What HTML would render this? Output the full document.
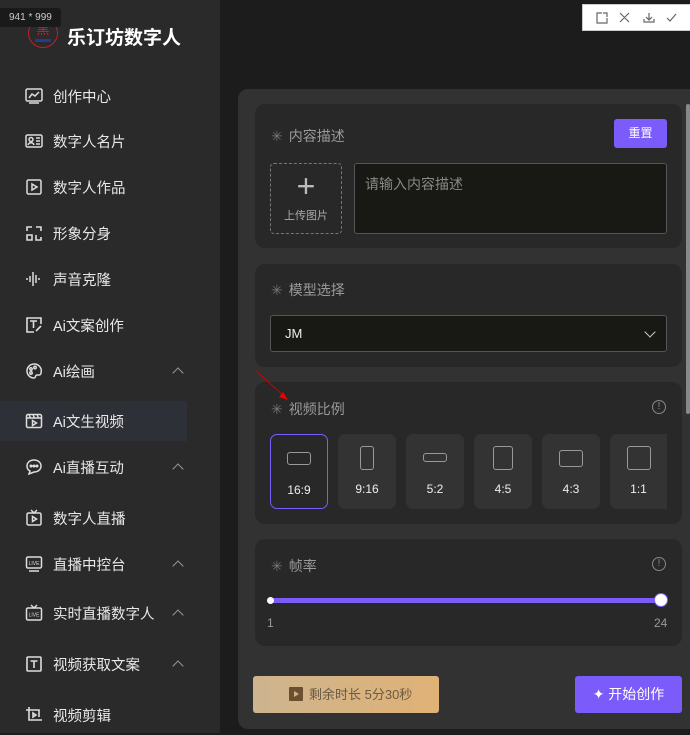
<!DOCTYPE html>
<html><head><meta charset="utf-8"><style>
*{box-sizing:border-box;margin:0;padding:0}
body{width:690px;height:733px;overflow:hidden;background:#1c1c1c;font-family:"Liberation Sans","Noto Sans CJK SC",sans-serif;position:relative;color:#ddd}
.side{position:absolute;left:0;top:0;width:220px;height:733px;background:#2a2a2a}
.logo{position:absolute;left:28px;top:18px;width:30px;height:30px;border-radius:50%;border:1.5px solid #c0202a;overflow:hidden}
.brand{position:absolute;left:67px;top:23px;font-size:19px;font-weight:bold;color:#fff}
.tag{position:absolute;left:0;top:8px;width:61px;height:19px;background:#1a1a1a;color:#ccc;font-size:10px;line-height:19px;padding-left:9px;border-radius:0 3px 3px 0}
.it{position:absolute;left:0;width:187px;height:40px;display:flex;align-items:center;font-size:14.5px;color:#e8e8e8}
.it svg{position:absolute;left:25px;width:18px;height:18px}
.it span{position:absolute;left:53px}
.it i{position:absolute;left:174px;width:8px;height:8px;border-left:1.4px solid #999;border-top:1.4px solid #999;transform:rotate(45deg);top:18px}
.act{background:#2e3038}
.panel{position:absolute;left:238px;top:89px;width:460px;height:640px;background:#323232;border-radius:10px}
.card{position:absolute;left:255px;width:427px;background:#282828;border-radius:10px}
.lbl{position:absolute;left:16px;font-size:14px;color:#9a9a9a}
.lbl b{font-weight:normal;color:#777;margin-right:6px}
.info{position:absolute;right:16px;width:14px;height:14px;border:1.3px solid #888;border-radius:50%;font-size:10px;color:#888;text-align:center;line-height:12px}
.r{position:absolute;top:52px;width:58px;height:75px;background:#333;border-radius:7px;text-align:center;font-size:12px;color:#eee}
.r .s{position:absolute;left:50%;transform:translateX(-50%);border:1.4px solid #999;border-radius:3px}
.r em{position:absolute;top:48px;left:0;right:0;font-style:normal}
</style></head><body>
<div class="side">
<div class="logo"><div style="color:#d0202a;font-size:13px;text-align:center;line-height:18px;margin-top:2px">黑</div><div style="height:3px;background:#2a3a8a;margin:0 6px"></div></div>
<div class="tag">941 * 999</div>
<div class="brand">乐订坊数字人</div>
<div class="it" style="top:76px"><svg viewBox="0 0 18 18" fill="none" stroke="#ddd" stroke-width="1.5"><rect x="1" y="2" width="16" height="12" rx="1.5"/><path d="M4 11l3-4 3 2 4-4M4 16h10"/></svg><span>创作中心</span></div>
<div class="it" style="top:121px"><svg viewBox="0 0 18 18" fill="none" stroke="#ddd" stroke-width="1.5"><rect x="1" y="3" width="16" height="12" rx="1.5"/><circle cx="6" cy="7.5" r="2"/><path d="M3 13c1-3 5-3 6 0M11 6h4M11 9h4M11 12h4"/></svg><span>数字人名片</span></div>
<div class="it" style="top:167px"><svg viewBox="0 0 18 18" fill="none" stroke="#ddd" stroke-width="1.5"><rect x="2" y="2" width="14" height="14" rx="1.5"/><path d="M7 6l5 3-5 3z"/></svg><span>数字人作品</span></div>
<div class="it" style="top:213px"><svg viewBox="0 0 18 18" fill="none" stroke="#ddd" stroke-width="1.6"><path d="M2 7V3h5M11 3h5v4M2 11h5v5H2zM11 11v5h5v-3"/></svg><span>形象分身</span></div>
<div class="it" style="top:259px"><svg viewBox="0 0 18 18" fill="none" stroke="#ddd" stroke-width="1.5"><path d="M2 8v2M5 6v6M8 2v14M11 5v8M14 8v2"/></svg><span>声音克隆</span></div>
<div class="it" style="top:305px"><svg viewBox="0 0 18 18" fill="none" stroke="#ddd" stroke-width="1.6"><path d="M16 8V2H2v14h7M5 5h7M8.5 5v7M11 15l5-5"/></svg><span>Ai文案创作</span></div>
<div class="it" style="top:351px"><svg viewBox="0 0 18 18" fill="none" stroke="#ddd" stroke-width="1.5"><path d="M9 2a7 7 0 1 0 0 14c2 0 1-3 3-3h2a2 2 0 0 0 2-2A7 7 0 0 0 9 2z"/><circle cx="6" cy="7" r="1.2"/><circle cx="10" cy="5.5" r="1.2"/><circle cx="6" cy="11" r="1.2"/></svg><span>Ai绘画</span><i></i></div>
<div class="it act" style="top:401px"><svg viewBox="0 0 18 18" fill="none" stroke="#ddd" stroke-width="1.5"><rect x="1.5" y="2.5" width="15" height="13" rx="1.5"/><path d="M1.5 6h15M4 2.5l1.5 3.5M8 2.5l1.5 3.5M12 2.5l1.5 3.5M7.5 8.5l4 2.5-4 2.5z"/></svg><span>Ai文生视频</span></div>
<div class="it" style="top:447px"><svg viewBox="0 0 18 18" fill="none" stroke="#ddd" stroke-width="1.5"><path d="M9 2c4 0 7 2.5 7 6s-3 6-7 6l-5 2 1-3c-2-1-3-3-3-5 0-3.5 3-6 7-6z"/><circle cx="6" cy="8" r=".8" fill="#ddd"/><circle cx="9" cy="8" r=".8" fill="#ddd"/><circle cx="12" cy="8" r=".8" fill="#ddd"/></svg><span>Ai直播互动</span><i></i></div>
<div class="it" style="top:498px"><svg viewBox="0 0 18 18" fill="none" stroke="#ddd" stroke-width="1.5"><rect x="2" y="4" width="14" height="12" rx="1.5"/><path d="M6 1l3 3 3-3M7.5 7.5l4 2.5-4 2.5z"/></svg><span>数字人直播</span></div>
<div class="it" style="top:544px"><svg viewBox="0 0 18 18" fill="none" stroke="#ddd" stroke-width="1.5"><rect x="1.5" y="2" width="15" height="11" rx="1.5"/><path d="M4 16h10"/><text x="9" y="10" font-size="5" fill="#ddd" stroke="none" text-anchor="middle">LIVE</text></svg><span>直播中控台</span><i></i></div>
<div class="it" style="top:593px"><svg viewBox="0 0 18 18" fill="none" stroke="#ddd" stroke-width="1.5"><rect x="1.5" y="4" width="15" height="12" rx="1.5"/><path d="M6 1l3 3 3-3"/><text x="9" y="12.5" font-size="5" fill="#ddd" stroke="none" text-anchor="middle">LIVE</text></svg><span>实时直播数字人</span><i></i></div>
<div class="it" style="top:644px"><svg viewBox="0 0 18 18" fill="none" stroke="#ddd" stroke-width="1.6"><rect x="2" y="2" width="14" height="14" rx="1"/><path d="M5.5 6h7M9 6v7"/></svg><span>视频获取文案</span><i></i></div>
<div class="it" style="top:695px"><svg viewBox="0 0 18 18" fill="none" stroke="#ddd" stroke-width="1.6"><path d="M4 1v13h13M1 4h13v7"/><path d="M8 7l3 2-3 2z"/></svg><span>视频剪辑</span></div>
</div>

<div style="position:absolute;left:582px;top:4px;width:110px;height:27px;background:#fff;border:1px solid #ccc">
<svg width="110" height="27" viewBox="0 0 110 27" fill="none" stroke="#666" stroke-width="1.2"><path d="M19 8h-5v10h10v-5M20 8h4v4"/><path d="M37 8l9 9M46 8l-9 9M66 8v7M63 12l3 3 3-3M61 14v3h10v-3M84 13l3 3 6-7"/></svg></div>

<div class="panel"></div>
<div style="position:absolute;left:686px;top:104px;width:4px;height:310px;background:#888;border-radius:2px"></div>

<div class="card" style="top:104px;height:144px">
<div class="lbl" style="top:22px"><b>✳</b>内容描述</div>
<div style="position:absolute;right:15px;top:15px;width:53px;height:29px;background:#7b5cfa;border-radius:3px;color:#fff;font-size:12px;text-align:center;line-height:29px">重置</div>
<div style="position:absolute;left:15px;top:59px;width:72px;height:71px;border:1px dashed #777;border-radius:4px;text-align:center">
<div style="font-size:32px;color:#bbb;line-height:34px;margin-top:5px;font-weight:200">+</div><div style="font-size:11px;color:#aaa;margin-top:4px">上传图片</div></div>
<div style="position:absolute;left:99px;top:59px;width:313px;height:71px;background:#181814;border:1px solid #555;border-radius:3px;padding:10px;font-size:14px;color:#888">请输入内容描述</div>
</div>

<div class="card" style="top:264px;height:103px">
<div class="lbl" style="top:16px"><b>✳</b>模型选择</div>
<div style="position:absolute;left:15px;top:51px;width:397px;height:37px;background:#181814;border:1px solid #555;border-radius:3px;font-size:13px;color:#eee;line-height:35px;padding-left:14px">JM
<div style="position:absolute;right:12px;top:12px;width:8px;height:8px;border-right:1.4px solid #ccc;border-bottom:1.4px solid #ccc;transform:rotate(45deg)"></div></div>
</div>

<div class="card" style="top:382px;height:142px">
<div class="lbl" style="top:17px"><b>✳</b>视频比例</div>
<div class="info" style="top:18px">!</div>
<div class="r" style="left:15px;border:1.5px solid #7b5cfa;background:#282828"><div class="s" style="top:17px;width:24px;height:13px"></div><em>16:9</em></div>
<div class="r" style="left:83px"><div class="s" style="top:12px;width:14px;height:24px"></div><em>9:16</em></div>
<div class="r" style="left:151px"><div class="s" style="top:19px;width:24px;height:9px"></div><em>5:2</em></div>
<div class="r" style="left:219px"><div class="s" style="top:12px;width:20px;height:24px"></div><em>4:5</em></div>
<div class="r" style="left:287px"><div class="s" style="top:16px;width:24px;height:17px"></div><em>4:3</em></div>
<div class="r" style="left:355px;width:57px;border-radius:7px 0 0 7px"><div class="s" style="top:12px;width:24px;height:24px"></div><em>1:1</em></div>
</div>

<div class="card" style="top:539px;height:107px">
<div class="lbl" style="top:17px"><b>✳</b>帧率</div>
<div class="info" style="top:18px">!</div>
<div style="position:absolute;left:14px;top:59px;width:392px;height:5px;background:#7b5cfa;border-radius:3px"></div>
<div style="position:absolute;left:12px;top:58px;width:7px;height:7px;background:#fff;border-radius:50%"></div>
<div style="position:absolute;left:399px;top:54px;width:14px;height:14px;background:#fff;border:1.5px solid #7b5cfa;border-radius:50%"></div>
<div style="position:absolute;left:12px;top:77px;font-size:12px;color:#999">1</div>
<div style="position:absolute;left:399px;top:77px;font-size:12px;color:#999">24</div>
</div>

<div style="position:absolute;left:253px;top:676px;width:186px;height:37px;border-radius:3px;background:linear-gradient(90deg,#cdb48f,#e0b276);font-size:13px;color:#6a5a44;line-height:37px;padding-left:56px">剩余时长 5分30秒
<div style="position:absolute;left:36px;top:11px;width:14px;height:14px;background:#6a5030;border-radius:1px"><div style="position:absolute;left:5px;top:4px;border-left:5px solid #d8b080;border-top:3px solid transparent;border-bottom:3px solid transparent"></div></div></div>
<div style="position:absolute;left:575px;top:676px;width:107px;height:37px;border-radius:3px;background:#7b5cfa;color:#fff;font-size:14px;text-align:center;line-height:37px">✦ 开始创作</div>

<svg style="position:absolute;left:255px;top:370px" width="40" height="40"><path d="M0 0L30 27" stroke="#c00" stroke-width="1"/><path d="M24 27l9 3-5-8z" fill="#e00"/></svg>
</body></html>
